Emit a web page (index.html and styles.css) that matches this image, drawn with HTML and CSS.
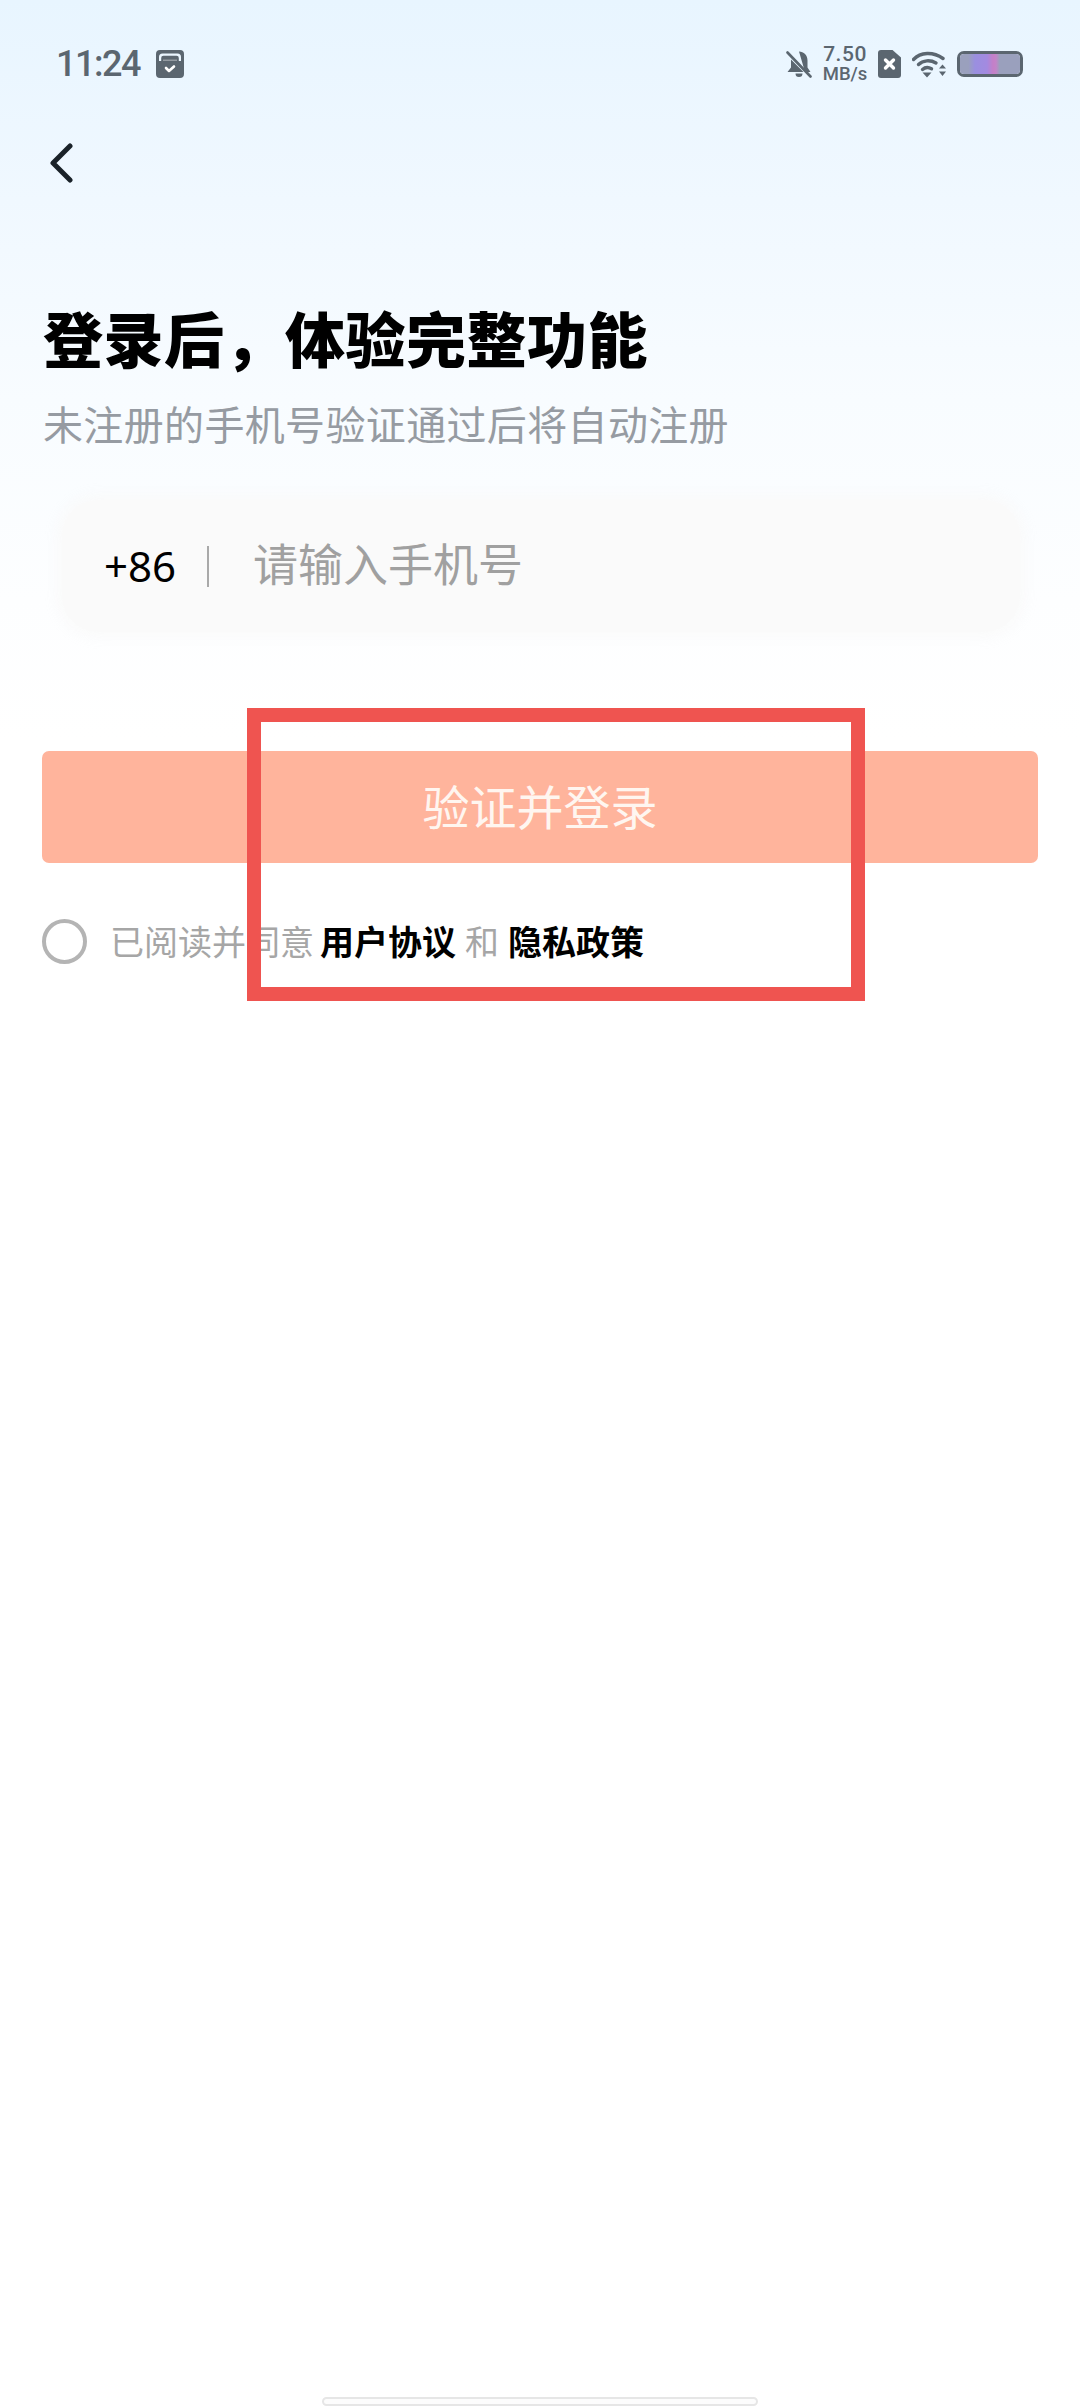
FILE: index.html
```html
<!DOCTYPE html>
<html lang="zh-CN">
<head>
<meta charset="utf-8">
<title>登录</title>
<link rel="stylesheet" href="styles.css">
</head>
<body>
<main class="screen">
  <header class="status">
    <div class="status-left">
      <span class="time">11:24</span>
      <svg class="ic-cal" viewBox="0 0 28 28"><path fill="#5b6670" fill-rule="evenodd" d="M4 0h20a4 4 0 0 1 4 4v20a4 4 0 0 1-4 4H4a4 4 0 0 1-4-4V4a4 4 0 0 1 4-4zM3 11V7a3.500 3.500 0 0 1 3.500-3.500h15A3.500 3.500 0 0 1 25 7v4h-2.200V8a2.200 2.200 0 0 0-2.200-2.200H7.400A2.200 2.200 0 0 0 5.200 8v3z"/><path fill="#fff" d="M7 9.500h14v1.500H7z" opacity=".35"/><path fill="none" stroke="#fff" stroke-width="2.600" stroke-linecap="round" stroke-linejoin="round" d="M10 18l3 3 5-4.500"/></svg>
    </div>
    <div class="status-right">
      <svg class="ic-bell" viewBox="0 0 26 27"><path fill="#5b6670" d="M13 0.500c4.800 0 8.500 3.700 8.500 9v7l3 4.500H19zM5 8.500L17.500 21H1.500l3.500-4.500zM9.500 22.500h7a3.500 3.500 0 0 1-7 0z"/><path stroke="#5b6670" stroke-width="2.600" stroke-linecap="round" d="M1.500 1.500l23 24"/></svg>
      <div class="speed"><span class="speed-val">7.50</span><span class="speed-unit">MB/s</span></div>
      <svg class="ic-sim" viewBox="0 0 23 28"><path fill="#5b6670" d="M3 0h11.500L23 7.500V25a3 3 0 0 1-3 3H3a3 3 0 0 1-3-3V3a3 3 0 0 1 3-3z"/><path stroke="#fff" stroke-width="3.400" stroke-linecap="round" d="M7.500 10l8 8M15.500 10l-8 8"/></svg>
      <svg class="ic-wifi" viewBox="0 0 34 28"><g fill="none" stroke="#5b6670" stroke-width="3.400" stroke-linecap="round"><path d="M1.500 9.500C8.500 2 21 1.500 31 8.500"/><path d="M6.500 14.500c4.500-4.500 12-4.800 17.500-1.500"/><path d="M10.500 19.500c2.500-2.200 6-2.400 9-.7"/></g><path fill="#5b6670" d="M10.500 22.500h9l-4.500 5zM27 18.500l3.500-4 3.500 4zM27 21.500h7l-3.500 4.500z"/></svg>
      <div class="battery"><div class="battery-fill"></div></div>
    </div>
  </header>

  <nav class="nav">
    <svg class="ic-back" viewBox="0 0 24 40"><path fill="none" stroke="#1a2229" stroke-width="5" stroke-linecap="round" stroke-linejoin="round" d="M21 3L4 20l17 17"/></svg>
  </nav>

  <section class="intro">
    <h1 class="title">登录后，体验完整功能</h1>
    <p class="subtitle">未注册的手机号验证通过后将自动注册</p>
  </section>

  <div class="phone">
    <span class="code">+86</span>
    <span class="divider"></span>
    <span class="placeholder">请输入手机号</span>
  </div>

  <button class="submit" type="button"><span class="submit-label">验证并登录</span></button>

  <div class="agree">
    <span class="radio"></span>
    <p class="agree-text">已阅读并同意<b class="link">用户协议</b><span class="and">和</span><b class="link">隐私政策</b></p>
  </div>

  <div class="highlight"></div>
  <div class="home-bar"></div>
</main>
</body>
</html>
```

FILE: styles.css
```css
* { box-sizing: border-box; }
html, body { margin: 0; padding: 0; }
body { background: #fff; font-family: "Noto Sans CJK SC", "Noto Sans", sans-serif; }

.screen {
  position: relative;
  width: 1080px;
  height: 2408px;
  overflow: hidden;
  display: flex;
  flex-direction: column;
  background: linear-gradient(180deg, #e8f5ff 0, #f0f8ff 200px, #f8fcff 400px, #fdfeff 600px, #fff 740px);
}

.status {
  height: 80px;
  padding: 46px 57px 0 56px;
  display: flex;
  justify-content: space-between;
  align-items: flex-start;
}
.status-left { display: flex; align-items: center; gap: 16px; height: 36px; }
.time { font-family: Roboto, sans-serif; font-weight: 500; font-size: 36px; line-height: 36px; color: #5b6670; letter-spacing: -1.500px; }
.ic-cal { width: 28px; height: 28px; display: block; }
.status-right { display: flex; align-items: center; gap: 11px; height: 36px; }
.ic-bell { width: 26px; height: 27px; display: block; }
.speed { display: flex; flex-direction: column; align-items: center; color: #5b6670; font-family: Roboto, sans-serif; font-weight: 500; width: 44px; }
.speed-val { font-size: 21px; line-height: 20px; letter-spacing: .5px; }
.speed-unit { font-size: 18.500px; line-height: 20px; }
.ic-sim { width: 23px; height: 28px; display: block; }
.ic-wifi { width: 34px; height: 28px; display: block; }
.battery { width: 66px; height: 26px; border: 3px solid #5b6670; border-radius: 7px; background: #9aa0bd; overflow: hidden; }
.battery-fill { width: 100%; height: 100%; background: linear-gradient(90deg, #9aa0bd 0, #9aa0bd 14%, #9a8fe0 25%, #a38ae0 45%, #c47fc8 55%, #c284c8 60%, #9aa0bd 66%); }

.nav { height: 112px; padding: 63px 0 0 49px; }
.ic-back { width: 24px; height: 40px; display: block; }

.intro { padding: 105px 0 0 43px; }
.title { margin: 0; font-size: 60px; line-height: 80px; font-weight: 900; color: #000; white-space: nowrap; letter-spacing: .5px; }
.subtitle { margin: 21px 0 0; font-size: 40px; line-height: 50px; color: #969ba2; font-weight: 400; white-space: nowrap; letter-spacing: .35px; }

.phone {
  margin: 52px 0 0 62px;
  width: 958px;
  height: 132px;
  border-radius: 36px;
  background: #fafafa;
  box-shadow: 0 0 14px 5px rgba(250, 250, 250, .9);
  display: flex;
  align-items: center;
  padding: 0 0 0 42px;
}
.code { font-family: "Noto Sans", sans-serif; font-size: 42px; line-height: 60px; color: #000; width: 103px; }
.divider { width: 2px; height: 41px; background: #a9a9a9; }
.placeholder { margin: -6px 0 0 44px; font-size: 45px; line-height: 60px; color: #a0a0a0; }

.submit {
  margin: 119px 0 0 42px;
  width: 996px;
  height: 112px;
  border: 0;
  border-radius: 7px;
  background: #ffb49c;
  color: #fff6f0;
  font: 400 47px/1 "Noto Sans CJK SC", sans-serif;
  padding: 0 0 6px;
}
.submit-label { display: block; }

.agree { margin: 56px 0 0 42px; display: flex; align-items: center; gap: 23px; }
.radio { width: 45px; height: 45px; border-radius: 50%; border: 4.500px solid #b4b4b4; flex: none; }
.agree-text { margin: -3px 0 0; font-size: 34px; line-height: 45px; color: #a6a6a6; white-space: nowrap; display: flex; }
.link { color: #000; font-weight: 700; margin-left: 6px; }
.and { margin-left: 9px; }
.and + .link { margin-left: 9px; }

.highlight {
  position: absolute;
  left: 247px;
  top: 708px;
  width: 618px;
  height: 293px;
  border: 14px solid #ef5450;
}
.home-bar {
  position: absolute;
  left: 322px;
  top: 2397px;
  width: 436px;
  height: 9px;
  border: 2px solid #e6e6e6;
  border-radius: 5px;
  background: #fcfcfc;
}
```
